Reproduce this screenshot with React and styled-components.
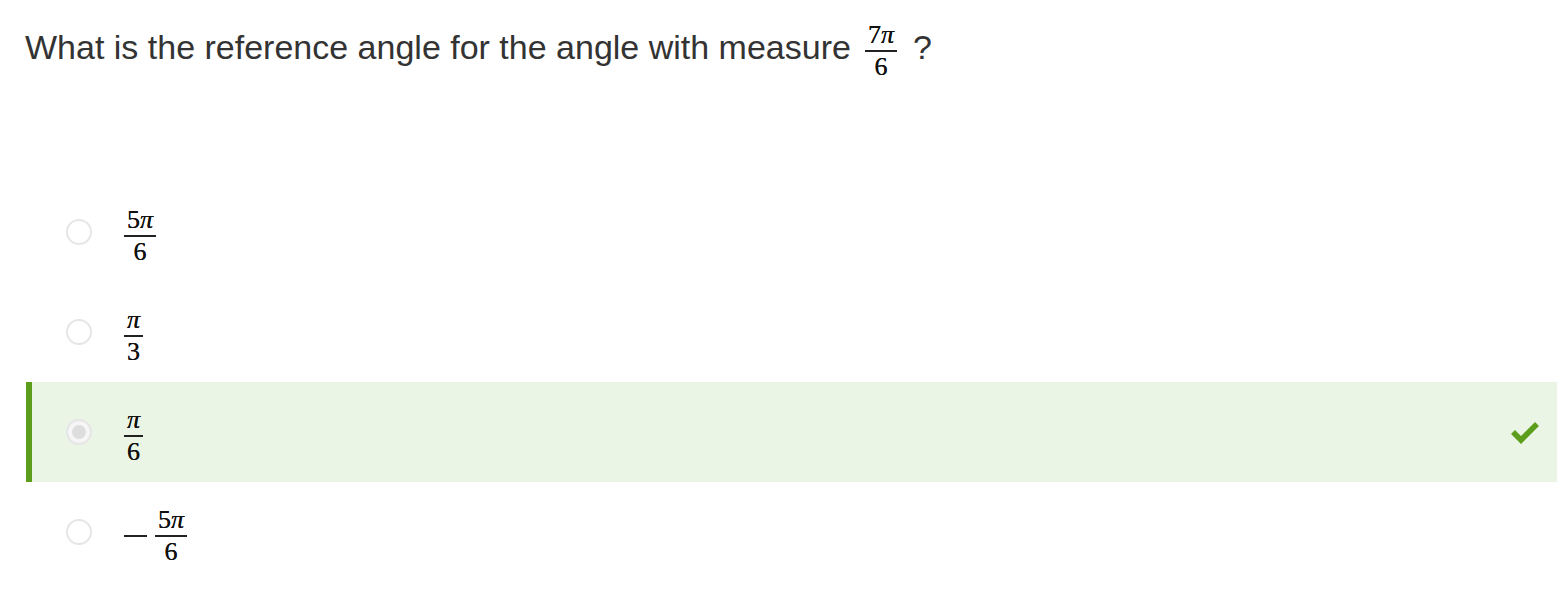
import styled, { createGlobalStyle } from "styled-components";

const Global = createGlobalStyle`
  body {
    margin: 0;
    background: #fff;
    font-family: "Liberation Sans", Arial, sans-serif;
    color: #333;
  }
`;

const Page = styled.div`
  padding: 16px 8px 0 26px;
`;

const Question = styled.div`
  display: flex;
  align-items: center;
  font-size: 34px;
  color: #333;
  height: 62px;
  margin-left: -1px;
`;

const Gap = styled.span`
  display: inline-block;
  width: ${(p) => p.w}px;
`;

const Options = styled.div`
  margin-top: 104px;
  display: flex;
  flex-direction: column;
`;

const Row = styled.div`
  height: 100px;
  display: flex;
  align-items: center;
  border-left: 6px solid ${(p) => (p.correct ? "#5c9e1c" : "transparent")};
  background: ${(p) => (p.correct ? "#eaf5e5" : "transparent")};
  padding-left: 34px;
  padding-right: 20px;
`;

const Radio = styled.span`
  box-sizing: border-box;
  width: 26px;
  height: 26px;
  border-radius: 50%;
  border: 2px solid #e6e6e6;
  background: ${(p) => (p.checked ? "#dddddd" : "#fff")};
  box-shadow: ${(p) => (p.checked ? "inset 0 0 0 4px #f6f6f6" : "none")};
  flex-shrink: 0;
`;

const Answer = styled.div`
  margin-left: 32px;
  display: flex;
  align-items: center;
  flex: 1;
`;

const Frac = styled.span`
  display: inline-flex;
  flex-direction: column;
  align-items: center;
  font-family: "Liberation Serif", "Times New Roman", serif;
  font-size: 26px;
  line-height: 0.95;
  color: #111;
  text-shadow: 0 0 0.4px #111;
  margin-top: 8px;
`;

const Num = styled.span`
  padding: 0 3px 2px;
`;

const Den = styled.span`
  border-top: 2px solid #222;
  align-self: stretch;
  text-align: center;
  padding-top: 3px;
`;

const Pi = styled.i`
  font-style: italic;
`;

const Minus = styled.span`
  display: inline-block;
  width: 23px;
  height: 2px;
  background: #222;
  margin-right: 8px;
  margin-top: 8px;
`;

const Check = styled.svg`
  width: 28px;
  height: 24px;
  margin-left: auto;
  margin-right: -2px;
`;

const Fraction = ({ num, den }) => (
  <Frac>
    <Num>{num}</Num>
    <Den>{den}</Den>
  </Frac>
);

const options = [
  { num: <>5<Pi>π</Pi></>, den: "6" },
  { num: <Pi>π</Pi>, den: "3" },
  { num: <Pi>π</Pi>, den: "6", correct: true },
  { num: <>5<Pi>π</Pi></>, den: "6", negative: true },
];

export default function App() {
  return (
    <Page>
      <Global />
      <Question>
        What is the reference angle for the angle with measure
        <Gap w={14} />
        <Fraction num={<>7<Pi>π</Pi></>} den="6" />
        <Gap w={16} />?
      </Question>
      <Options>
        {options.map((o, i) => (
          <Row key={i} correct={o.correct}>
            <Radio checked={o.correct} />
            <Answer>
              {o.negative && <Minus aria-label="minus" />}
              <Fraction num={o.num} den={o.den} />
              {o.correct && (
                <Check viewBox="0 0 28 24">
                  <path d="M2 12 L10 20 L26 4" fill="none" stroke="#5c9e1c" strokeWidth="5.5" />
                </Check>
              )}
            </Answer>
          </Row>
        ))}
      </Options>
    </Page>
  );
}
